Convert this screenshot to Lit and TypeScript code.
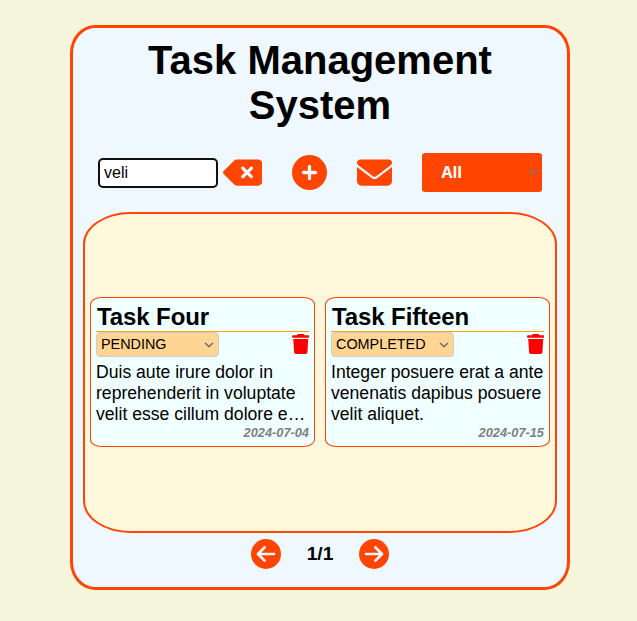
import { LitElement, html, css, svg } from "lit";
import { customElement, property, state } from "lit/decorators.js";

interface Task {
  title: string;
  status: string;
  text: string;
  date: string;
}

const TASKS: Task[] = [
  {
    title: "Task Four",
    status: "PENDING",
    text: "Duis aute irure dolor in reprehenderit in voluptate velit esse cillum dolore e…",
    date: "2024-07-04",
  },
  {
    title: "Task Fifteen",
    status: "COMPLETED",
    text: "Integer posuere erat a ante venenatis dapibus posuere velit aliquet.",
    date: "2024-07-15",
  },
];

const icons = {
  clear: {
    box: "0 0 576 512",
    body: svg`<path d="M576 128c0-35.3-28.7-64-64-64H205.3c-17 0-33.3 6.7-45.3 18.7L9.4 233.4c-6 6-9.4 14.1-9.4 22.6s3.4 16.6 9.4 22.6L160 429.3c12 12 28.3 18.7 45.3 18.7H512c35.3 0 64-28.7 64-64V128zM271 175c9.4-9.4 24.6-9.4 33.9 0l47 47 47-47c9.4-9.4 24.6-9.4 33.9 0s9.4 24.6 0 33.9l-47 47 47 47c9.4 9.4 9.4 24.6 0 33.9s-24.6 9.4-33.9 0l-47-47-47 47c-9.4 9.4-24.6 9.4-33.9 0s-9.4-24.6 0-33.9l47-47-47-47c-9.4-9.4-9.4-24.6 0-33.9z"/>`,
  },
  plus: {
    box: "0 0 512 512",
    body: svg`<path d="M256 512A256 256 0 1 0 256 0a256 256 0 1 0 0 512zM232 344V280H168c-13.3 0-24-10.7-24-24s10.7-24 24-24h64V168c0-13.3 10.7-24 24-24s24 10.7 24 24v64h64c13.3 0 24 10.7 24 24s-10.7 24-24 24H280v64c0 13.3-10.7 24-24 24s-24-10.7-24-24z"/>`,
  },
  mail: {
    box: "0 0 512 512",
    body: svg`<path d="M48 64C21.5 64 0 85.5 0 112c0 15.1 7.1 29.3 19.2 38.4L236.8 313.6c11.4 8.5 27 8.5 38.4 0L492.8 150.4c12.1-9.1 19.2-23.3 19.2-38.4c0-26.5-21.5-48-48-48H48zM0 176V384c0 35.3 28.7 64 64 64H448c35.3 0 64-28.7 64-64V176L294.4 339.2c-22.8 17.1-54 17.1-76.8 0L0 176z"/>`,
  },
  trash: {
    box: "0 0 448 512",
    body: svg`<path d="M135.2 17.7L128 32H32C14.3 32 0 46.3 0 64S14.3 96 32 96H416c17.7 0 32-14.3 32-32s-14.3-32-32-32H320l-7.2-14.3C307.4 6.8 296.3 0 284.2 0H163.8c-12.1 0-23.2 6.8-28.6 17.7zM416 128H32L53.2 467c1.6 25.3 22.6 45 47.9 45H346.9c25.3 0 46.3-19.7 47.9-45L416 128z"/>`,
  },
  prev: {
    box: "0 0 512 512",
    body: svg`<circle cx="256" cy="256" r="256"/><path d="M392 256H122M232 143L119 256l113 113" fill="none" stroke="aliceblue" stroke-width="46" stroke-linecap="round" stroke-linejoin="round"/>`,
  },
  next: {
    box: "0 0 512 512",
    body: svg`<circle cx="256" cy="256" r="256"/><path d="M120 256H390M280 143l113 113-113 113" fill="none" stroke="aliceblue" stroke-width="46" stroke-linecap="round" stroke-linejoin="round"/>`,
  },
  chevron: {
    box: "0 0 10 6",
    body: svg`<path d="M1 1l4 3.7L9 1" fill="none" stroke="#767676" stroke-width="1.7"/>`,
  },
};

const icon = (name: keyof typeof icons, cls: string) =>
  html`<svg class=${cls} viewBox=${icons[name].box} fill="currentColor" aria-hidden="true">${icons[name].body}</svg>`;

@customElement("task-card")
class TaskCard extends LitElement {
  @property({ attribute: false }) task!: Task;

  static styles = css`
    :host {
      display: flex;
      flex-direction: column;
      box-sizing: border-box;
      width: 225px;
      height: 150px;
      padding: 5px;
      border: 1px solid orangered;
      border-radius: 5%;
      background: azure;
    }
    .title {
      margin: 0;
      height: 28px;
      padding-left: 1px;
      border-bottom: 1px solid orange;
      font-size: 24px;
      line-height: 28px;
      font-weight: bold;
      letter-spacing: -0.1px;
    }
    .row {
      display: flex;
      justify-content: space-between;
      align-items: center;
      height: 25px;
    }
    .status {
      display: flex;
      justify-content: space-between;
      align-items: center;
      box-sizing: border-box;
      width: 123px;
      height: 25px;
      padding: 0 4px;
      border: 1px solid #ccc;
      border-radius: 4px;
      background: #ffd591;
      font-size: 14.4px;
      line-height: 23px;
    }
    .chevron {
      width: 10px;
      height: 6px;
    }
    .trash {
      width: 17.5px;
      height: 20px;
      color: red;
      margin-top: -2px;
    }
    .text {
      margin: 5px 0 0;
      height: 63px;
      font-size: 17.6px;
      line-height: 21px;
    }
    .date {
      color: gray;
      font-size: 12.8px;
      line-height: 16px;
      font-style: italic;
      font-weight: bold;
      text-align: right;
    }
  `;

  render() {
    const t = this.task;
    return html`
      <h2 class="title">${t.title}</h2>
      <div class="row">
        <div class="status"><span>${t.status}</span>${icon("chevron", "chevron")}</div>
        ${icon("trash", "trash")}
      </div>
      <p class="text">${t.text}</p>
      <div class="date">${t.date}</div>
    `;
  }
}

@customElement("app-root")
class AppRoot extends LitElement {
  @state() query = "veli";

  static styles = css`
    :host {
      display: block;
      box-sizing: border-box;
      height: 621px;
      padding: 25px 67px 0 70px;
      background: beige;
      color: black;
      font-family: "Liberation Sans", Arial, sans-serif;
    }
    .panel {
      box-sizing: border-box;
      width: 500px;
      height: 565px;
      padding: 10px;
      border: 3px solid orangered;
      border-radius: 5%;
      background: aliceblue;
    }
    .heading {
      margin: 0 40px;
      font-size: 40px;
      line-height: 45px;
      font-weight: bold;
      text-align: center;
    }
    .toolbar {
      display: flex;
      align-items: center;
      height: 39px;
      margin: 25px 0 20px;
      padding-left: 15px;
      color: orangered;
    }
    .search {
      box-sizing: border-box;
      width: 120px;
      height: 30px;
      padding: 0 4px;
      border: 2px solid #101010;
      border-radius: 5px;
      outline: none;
      background: white;
      color: black;
      font: 16px "Liberation Sans", Arial, sans-serif;
    }
    .clear {
      width: 39.4px;
      height: 35px;
      margin-left: 5px;
    }
    .plus {
      width: 35px;
      height: 35px;
      margin-left: 30px;
    }
    .mail {
      width: 35px;
      height: 35px;
      margin-left: 30px;
    }
    .filter {
      display: flex;
      justify-content: space-between;
      align-items: center;
      box-sizing: border-box;
      width: 120px;
      height: 39px;
      margin-left: 30px;
      padding: 0 4px 2px 19px;
      border-radius: 3px;
      background: orangered;
      color: white;
      font: bold 16px "Open Sans", sans-serif;
    }
    .chevron {
      width: 10px;
      height: 6px;
    }
    .list {
      display: flex;
      justify-content: center;
      align-items: center;
      gap: 10px;
      box-sizing: border-box;
      height: 321px;
      padding-bottom: 1px;
      border: 2px solid orangered;
      border-radius: 10%;
      background: cornsilk;
    }
    .pager {
      display: flex;
      justify-content: center;
      align-items: center;
      gap: 25px;
      margin-top: 6px;
      font-size: 20px;
      font-weight: bold;
    }
    .count {
      width: 28px;
      text-align: center;
      font-size: 19.2px;
    }
    .arrow {
      width: 30px;
      height: 30px;
      color: orangered;
    }
  `;

  render() {
    return html`
      <main class="panel">
        <h1 class="heading">Task Management System</h1>
        <div class="toolbar">
          <input class="search" .value=${this.query} aria-label="Search" />
          ${icon("clear", "clear")} ${icon("plus", "plus")} ${icon("mail", "mail")}
          <div class="filter"><span>All</span>${icon("chevron", "chevron")}</div>
        </div>
        <section class="list">
          ${TASKS.map((t) => html`<task-card .task=${t}></task-card>`)}
        </section>
        <div class="pager">
          ${icon("prev", "arrow")}<span class="count">1/1</span>${icon("next", "arrow")}
        </div>
      </main>
    `;
  }
}
